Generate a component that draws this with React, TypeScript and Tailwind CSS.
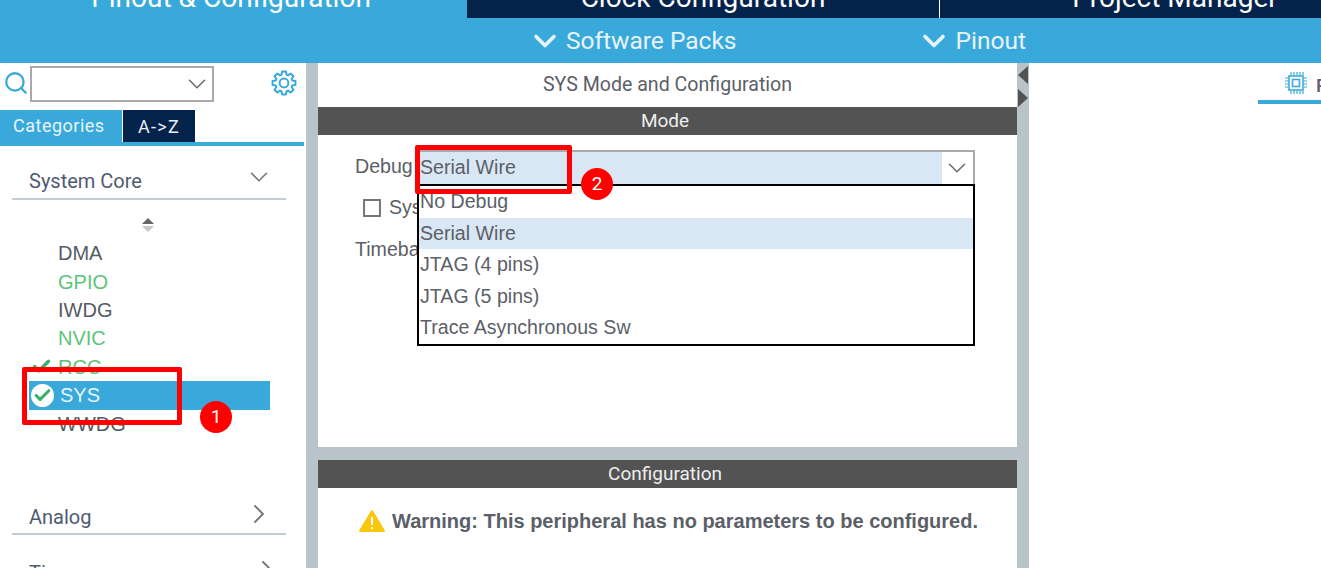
import React from 'react';
import { ChevronDown, ChevronRight, Search, Check } from 'lucide-react';

const PERIPHERALS = [
  { name: 'DMA', color: 'text-[#555b66]' },
  { name: 'GPIO', color: 'text-[#5cc47a]' },
  { name: 'IWDG', color: 'text-[#555b66]' },
  { name: 'NVIC', color: 'text-[#5cc47a]' },
  { name: 'RCC', color: 'text-[#5cc47a]', checked: true },
  { name: 'SYS', selected: true },
  { name: 'WWDG', color: 'text-[#555b66]' },
];

const DEBUG_OPTIONS = ['No Debug', 'Serial Wire', 'JTAG (4 pins)', 'JTAG (5 pins)', 'Trace Asynchronous Sw'];

// eight teeth gear outline, walked round the centre
const GEAR_PATH = Array.from({ length: 8 }, (_, i) => {
  const a = (i * Math.PI) / 4;
  const pt = (r: number, d: number) => `${(13 + r * Math.sin(a + d)).toFixed(2)} ${(13 - r * Math.cos(a + d)).toFixed(2)}`;
  return `${i === 0 ? 'M' : 'L'}${pt(8.6, -0.3)} L${pt(11.6, -0.17)} L${pt(11.6, 0.17)} L${pt(8.6, 0.3)}`;
}).join(' ') + ' Z';

const GearIcon = () => (
  <svg width="26" height="26" viewBox="0 0 26 26" fill="none" stroke="#39a9dc" strokeWidth="2" strokeLinejoin="round" className="ml-[57px] -mt-[2px] shrink-0">
    <path d={GEAR_PATH} />
    <circle cx="13" cy="13" r="4.4" />
  </svg>
);

const Splitter = ({ children }: { children?: React.ReactNode }) => (
  <div className="relative w-[12px] shrink-0 bg-[#b9c4ca]">{children}</div>
);

const ChipIcon = () => (
  <svg width="22" height="22" viewBox="0 0 22 22" fill="none" stroke="#39a9dc" className="shrink-0">
    <rect x="4" y="4" width="14" height="14" strokeWidth="1.6" />
    <rect x="7.5" y="7.5" width="7" height="7" strokeWidth="1.6" />
    <path d="M6 0v3M9 0v3M12 0v3M15 0v3M18 0v3M6 19v3M9 19v3M12 19v3M15 19v3M18 19v3M0 6h3M0 9h3M0 12h3M0 15h3M19 6h3M19 9h3M19 12h3M19 15h3" strokeWidth="1.2" />
  </svg>
);

const Sidebar = () => (
  <div className="flex w-[306px] shrink-0 flex-col overflow-hidden bg-white">
    <div className="flex h-[47px] shrink-0 items-center pb-[5px] pl-[3px]">
      <Search size={26} strokeWidth={2.1} className="mr-[1px] -mt-[2px] shrink-0 text-[#39a9dc]" />
      <div className="flex h-[36px] w-[184px] items-center justify-end border-2 border-[#a9a9a9]">
        <ChevronDown size={30} strokeWidth={1.3} className="text-[#6f6f6f]" />
      </div>
      <GearIcon />
    </div>
    <div className="mr-[2px] flex h-[36px] shrink-0 border-b-[4px] border-[#39a9dc]">
      <div className="flex w-[122px] items-center bg-[#39a9dc] pb-[1px] pl-[13px] text-[18px] tracking-[0.5px] text-[#e8f4fb]">Categories</div>
      <div className="ml-[1px] flex w-[72px] items-center justify-center bg-[#03234b] text-[18px] tracking-[1.3px] text-[#e8eef4]">A-&gt;Z</div>
    </div>
    <div className="mx-[12px] mt-[17px] flex h-[37px] w-[274px] shrink-0 items-center justify-between border-b-2 border-[#c3ccd1] pl-[17px] pr-[12px]">
      <span className="text-[20px] text-[#4f5a72]">System Core</span>
      <ChevronDown size={30} strokeWidth={1.3} className="-mt-[8px] text-[#777]" />
    </div>
    <div className="ml-[141px] mt-[18px] flex w-[14px] shrink-0 flex-col items-center gap-[2px]">
      <div className="h-0 w-0 border-x-[6px] border-b-[6px] border-x-transparent border-b-[#666]" />
      <div className="h-0 w-0 border-x-[6px] border-t-[6px] border-x-transparent border-t-[#c8c8c8]" />
    </div>
    <div className="ml-[29px] mt-[7px] flex w-[241px] shrink-0 flex-col">
      {PERIPHERALS.map((p) =>
        p.selected ? (
          <div key={p.name} className="flex h-[29px] items-center bg-[#39a9dc] pl-[2px]">
            <div className="flex h-[23px] w-[23px] items-center justify-center rounded-full bg-white">
              <Check size={19} strokeWidth={4} className="text-[#3ab26e]" />
            </div>
            <span className="ml-[6px] font-['Liberation_Sans',sans-serif] text-[20px] text-[#e8f4fb]">{p.name}</span>
          </div>
        ) : (
          <div key={p.name} className={`flex h-[28.4px] items-center pl-[29px] font-['Liberation_Sans',sans-serif] text-[20px] ${p.color}`}>
            {p.checked && <Check size={21} strokeWidth={4} className="-ml-[27px] mr-[6px] text-[#3ab26e]" />}
            {p.name}
          </div>
        ),
      )}
    </div>
    <div className="mx-[12px] mt-[59px] flex h-[38px] w-[274px] shrink-0 items-center justify-between border-b-2 border-[#c3ccd1] pl-[17px] pr-[11px] pt-[4px]">
      <span className="text-[20px] text-[#4f5a72]">Analog</span>
      <ChevronRight size={32} strokeWidth={1.4} className="-mt-[6px] text-[#777]" />
    </div>
    <div className="mx-[12px] mt-[23px] flex shrink-0 items-center justify-between pl-[17px] pr-[11px]">
      <span className="text-[20px] text-[#4f5a72]">Timers</span>
      <ChevronRight size={32} strokeWidth={1.4} className="-mt-[6px] text-[#777]" />
    </div>
  </div>
);

const ModePanel = () => (
  <div className="relative flex w-[699px] shrink-0 flex-col bg-[#b9c4ca]">
    <div className="flex h-[44px] shrink-0 items-center justify-center bg-white text-[19.6px] text-[#5b5f68]">SYS Mode and Configuration</div>
    <div className="flex h-[28px] shrink-0 items-center justify-center bg-[#525352] pr-[5px] text-[19px] text-[#eeeeee]">Mode</div>
    <div className="relative h-[312px] shrink-0 bg-white font-['Liberation_Sans',sans-serif] text-[19.6px] text-[#5b5f68]">
      <div className="ml-[37px] mt-[15px] flex h-[34px] items-center">
        <span className="w-[62px] shrink-0">Debug</span>
        <div className="flex h-[34px] w-[558px] shrink-0 items-center justify-between border-2 border-b-0 border-[#a9a9a9]">
          <div className="flex h-full w-[523px] items-center bg-[#d9e7f4] pl-[1px]">Serial Wire</div>
          <ChevronDown size={30} strokeWidth={1.3} className="mr-[1px] text-[#6f6f6f]" />
        </div>
      </div>
      <div className="ml-[45px] mt-[9px] flex h-[30px] items-center">
        <div className="h-[18px] w-[18px] border-2 border-[#777]" />
        <span className="ml-[8px]">Sys</span>
      </div>
      <div className="ml-[37px] mt-[11px] flex h-[32px] items-center">Timeba</div>
      {/* open dropdown list */}
      <div className="absolute left-[99px] top-[49px] w-[558px] border-2 border-black bg-white">
        {DEBUG_OPTIONS.map((opt) => (
          <div key={opt} className={`flex h-[31.6px] items-center pl-[1px] ${opt === 'Serial Wire' ? 'bg-[#d9e7f4]' : ''}`}>{opt}</div>
        ))}
      </div>
    </div>
    <div className="mt-[13px] flex h-[28px] shrink-0 items-center justify-center bg-[#525352] pr-[5px] text-[19px] text-[#eeeeee]">Configuration</div>
    <div className="flex-1 bg-white pl-[41px] pt-[18px]">
      <div className="flex items-center gap-[7px] font-['Liberation_Sans',sans-serif] text-[20px] font-bold text-[#5b5f68]">
        <svg width="26" height="24" viewBox="0 0 26 24">
          <path d="M13 2 L25 22 H1 Z" fill="#fbc70a" stroke="#fbc70a" strokeWidth="2" strokeLinejoin="round" />
          <path d="M13 8v8M13 18v2" stroke="#fff" strokeWidth="2" />
        </svg>
        Warning: This peripheral has no parameters to be configured.
      </div>
    </div>
  </div>
);

const Badge = ({ n, className }: { n: number; className: string }) => (
  <div className={`absolute flex h-[32px] w-[32px] items-center justify-center rounded-full bg-[#ff0000] text-[19px] text-white ${className}`}>{n}</div>
);

export default function App() {
  return (
    <div className="relative flex h-[568px] w-[1321px] flex-col overflow-hidden bg-white font-['Roboto',sans-serif]">
      {/* top tabs, cut off by the screenshot */}
      <div className="flex h-[18px] w-[1410px] shrink-0 overflow-hidden text-[28px] leading-[18px] text-white">
        <div className="flex w-[467px] justify-center bg-[#39a9dc] pr-[5px]"><span className="-mt-[11px]">Pinout &amp; Configuration</span></div>
        <div className="flex w-[473px] justify-center border-r border-white bg-[#03234b]"><span className="-mt-[11px]">Clock Configuration</span></div>
        <div className="flex w-[470px] justify-center bg-[#03234b]"><span className="-mt-[11px]">Project Manager</span></div>
      </div>
      <div className="flex h-[45px] shrink-0 items-center bg-[#39a9dc] pt-[1px] text-[24.5px] text-[#e8f4fb]">
        <div className="ml-[527px] flex items-center gap-[3px]">
          <ChevronDown size={36} strokeWidth={2.4} />
          <span>Software Packs</span>
        </div>
        <div className="ml-[180px] flex items-center gap-[3px]">
          <ChevronDown size={36} strokeWidth={2.4} />
          <span>Pinout</span>
        </div>
      </div>
      <div className="flex min-h-0 flex-1">
        <Sidebar />
        <Splitter />
        <ModePanel />
        <Splitter>
          <div className="absolute left-[1px] top-[3px] h-0 w-0 border-y-[9px] border-r-[10px] border-y-transparent border-r-[#525352]" />
          <div className="absolute left-[1px] top-[26px] h-0 w-0 border-y-[9px] border-l-[10px] border-y-transparent border-l-[#525352]" />
        </Splitter>
        <div className="flex flex-1 justify-end bg-white">
          <div className="mt-[9px] flex h-[32px] w-[63px] items-start border-b-[4px] border-[#39a9dc] pl-[27px] text-[19px] font-medium text-[#5b5f68]">
            <ChipIcon />
            <span className="ml-[9px] shrink-0">P</span>
          </div>
        </div>
      </div>
      {/* red annotations */}
      <div className="absolute left-[22px] top-[367px] h-[58px] w-[160px] rounded-[2px] border-[5px] border-[#ff0000]" />
      <Badge n={1} className="left-[200px] top-[401px]" />
      <div className="absolute left-[415px] top-[145px] h-[49px] w-[157px] rounded-[2px] border-[5px] border-[#ff0000]" />
      <Badge n={2} className="left-[581px] top-[168px]" />
    </div>
  );
}
